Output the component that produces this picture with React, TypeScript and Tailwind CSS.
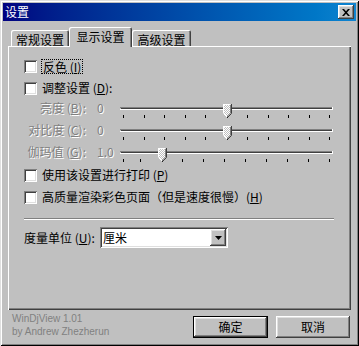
import React from "react";

const raised =
  "shadow-[inset_-1px_-1px_0_#404040,inset_1px_1px_0_#fff,inset_-2px_-2px_0_#808080,inset_2px_2px_0_#dfdfdf]";
const sunken =
  "shadow-[inset_1px_1px_0_#808080,inset_-1px_-1px_0_#fff,inset_2px_2px_0_#404040,inset_-2px_-2px_0_#dfdfdf]";
const dim = "text-[#808080] [text-shadow:1px_1px_0_#fff]";

function CheckBox() {
  return <span className={`w-[13px] h-[13px] shrink-0 bg-white ${sunken}`} />;
}

function Slider({ thumb, ticks }: { thumb: number; ticks: number[] }) {
  return (
    <svg width="214" height="22" viewBox="0 0 214 22" className="shrink-0">
      <defs>
        <pattern id="dither" width="2" height="2" patternUnits="userSpaceOnUse">
          <rect width="2" height="2" fill="#c0c0c0" />
          <rect width="1" height="1" fill="#fff" />
          <rect x="1" y="1" width="1" height="1" fill="#fff" />
        </pattern>
      </defs>
      {/* groove */}
      <rect x="0" y="10" width="212" height="1" fill="#808080" />
      <rect x="1" y="11" width="211" height="1" fill="#404040" />
      <rect x="0" y="12" width="213" height="1" fill="#fff" />
      <rect x="212" y="10" width="1" height="3" fill="#fff" />
      {ticks.map((t) => (
        <rect key={t} x={t} y="18" width="1" height="3" fill="#000" />
      ))}
      {/* thumb */}
      <g transform={`translate(${thumb - 4} 7)`}>
        <polygon points="0,0 8,0 8,9 4,13 0,9" fill="url(#dither)" />
        <polyline points="0.5,9 0.5,0.5 7.5,0.5" fill="none" stroke="#fff" strokeWidth="1" />
        <polyline points="8.5,0 8.5,9.5 4.5,13.5" fill="none" stroke="#404040" strokeWidth="1" />
        <polyline points="7.5,1 7.5,9 4,12.5" fill="none" stroke="#808080" strokeWidth="1" />
        <line x1="0.5" y1="9.5" x2="4" y2="13" stroke="#fff" strokeWidth="1" />
      </g>
    </svg>
  );
}

const ticksA = [3, 24, 44, 65, 85, 107, 127, 148, 168, 189, 209];
const ticksG = [3, 20, 42, 62, 83, 104, 125, 146, 167, 188, 209];

export default function App() {
  return (
    <div
      className={`w-[359px] h-[346px] bg-[#c0c0c0] p-[3px] flex flex-col text-black text-[12px] leading-[14px] font-['Noto_Sans_CJK_SC','Noto_Sans_CJK_JP',sans-serif] shadow-[inset_1px_1px_0_#dfdfdf,inset_-1px_-1px_0_#000,inset_2px_2px_0_#fff,inset_-2px_-2px_0_#808080]`}
    >
      {/* title bar */}
      <div className="h-[18px] shrink-0 flex items-center justify-between pl-[2px] pr-[2px] bg-linear-to-r from-[#000080] to-[#1084d0]">
        <span className="text-white">设置</span>
        <span className={`w-[16px] h-[14px] bg-[#c0c0c0] flex items-center justify-center ${raised}`}>
          <svg width="8" height="7" viewBox="0 0 8 7">
            <path d="M0 0h2l2 2.2L6 0h2L5 3.5 8 7H6L4 4.8 2 7H0l3-3.5z" fill="#000" />
          </svg>
        </span>
      </div>

      <div className="px-[5px] mt-[6px] flex flex-col">
        {/* tabs */}
        <div className="h-[19px] flex items-end pl-[3px]">
          <div className="w-[58px] h-[16px] rounded-t-[2px] flex items-center justify-center pt-[3px] shadow-[inset_1px_1px_0_#fff,inset_-1px_0_0_#404040,inset_-2px_0_0_#808080]">
            常规设置
          </div>
          <div className="w-[63px] h-[20px] -mb-[1px] relative z-10 bg-[#c0c0c0] rounded-t-[2px] flex items-center justify-center shadow-[inset_1px_1px_0_#fff,inset_-1px_0_0_#404040,inset_-2px_0_0_#808080]">
            显示设置
          </div>
          <div className="w-[59px] h-[16px] rounded-t-[2px] flex items-center justify-center pt-[3px] shadow-[inset_1px_1px_0_#fff,inset_-1px_0_0_#404040,inset_-2px_0_0_#808080]">
            高级设置
          </div>
        </div>

        {/* panel */}
        <div className="h-[264px] flex flex-col pl-[16px] pt-[9px] shadow-[inset_1px_1px_0_#fff,inset_-1px_-1px_0_#404040,inset_-2px_-2px_0_#808080]">
          <div className="h-[22px] flex items-center gap-[4px]">
            <CheckBox />
            <span className="h-[15px] px-[1px] border border-dotted border-black leading-[13px]">
              反色 (<u>I</u>)
            </span>
          </div>
          <div className="h-[18px] mt-[2px] flex items-center gap-[5px]">
            <CheckBox />
            <span>调整设置 (<u>D</u>):</span>
          </div>

          <div className="h-[22px] flex items-center">
            <span className={`w-[62px] text-right ${dim}`}>亮度 (<u>B</u>):</span>
            <span className={`w-[34px] pl-[11px] ${dim}`}>0</span>
            <Slider thumb={107} ticks={ticksA} />
          </div>
          <div className="h-[22px] flex items-center">
            <span className={`w-[62px] text-right ${dim}`}>对比度 (<u>C</u>):</span>
            <span className={`w-[34px] pl-[11px] ${dim}`}>0</span>
            <Slider thumb={107} ticks={ticksA} />
          </div>
          <div className="h-[22px] flex items-center">
            <span className={`w-[62px] text-right ${dim}`}>伽玛值 (<u>G</u>):</span>
            <span className={`w-[34px] pl-[11px] ${dim}`}>1.0</span>
            <Slider thumb={42} ticks={ticksG} />
          </div>

          <div className="h-[22px] mt-[1px] flex items-center gap-[5px]">
            <CheckBox />
            <span>使用该设置进行打印 (<u>P</u>)</span>
          </div>
          <div className="h-[22px] flex items-center gap-[5px]">
            <CheckBox />
            <span>高质量渲染彩色页面（但是速度很慢）(<u>H</u>)</span>
          </div>

          <div className="mt-[10px] w-[310px] h-[2px] border-t border-t-[#808080] border-b border-b-white" />

          <div className="h-[21px] mt-[7px] flex items-center">
            <span className="w-[76px]">度量单位 (<u>U</u>):</span>
            <div className={`w-[128px] h-[21px] bg-white flex items-center justify-between pl-[3px] pr-[2px] ${sunken}`}>
              <span>厘米</span>
              <span className={`w-[16px] h-[17px] bg-[#c0c0c0] flex items-center justify-center ${raised}`}>
                <svg width="7" height="4" viewBox="0 0 7 4">
                  <polygon points="0,0 7,0 3.5,4" fill="#000" />
                </svg>
              </span>
            </div>
          </div>
        </div>
      </div>

      {/* footer */}
      <div className="flex-1 flex justify-between items-start">
        <div className="pl-[9px] pt-[2px] text-[10px] leading-[13px] text-[#808080] font-['Liberation_Sans',Arial,sans-serif]">
          <div>WinDjView 1.01</div>
          <div>by Andrew Zhezherun</div>
        </div>
        <div className="flex gap-[8px] pt-[6px] pr-[6px]">
          <button className="w-[75px] h-[22px] border border-black bg-[#c0c0c0] p-0">
            <span className={`w-full h-full flex items-center justify-center ${raised}`}>确定</span>
          </button>
          <button className={`w-[74px] h-[22px] bg-[#c0c0c0] flex items-center justify-center ${raised}`}>取消</button>
        </div>
      </div>
    </div>
  );
}
